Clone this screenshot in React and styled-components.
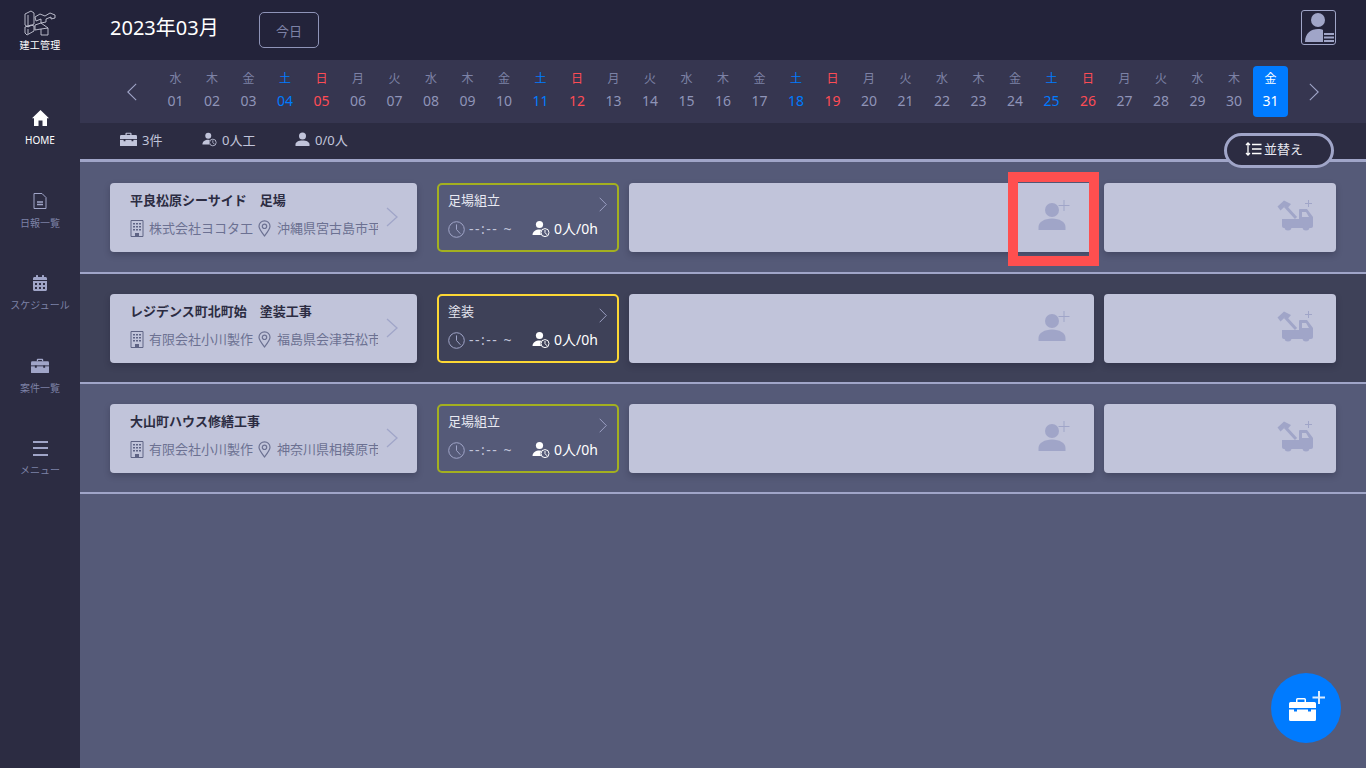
import React from 'react'
import styled, { createGlobalStyle } from 'styled-components'
import { FaCalendarAlt } from 'react-icons/fa'

const GlobalStyle = createGlobalStyle`
  html, body {
    margin: 0;
    padding: 0;
    height: 100%;
    overflow: hidden;
    background: #555a78;
    font-family: "Noto Sans", "Noto Sans CJK JP", sans-serif;
  }
  * { box-sizing: border-box; }
`

const WEEK = ['水', '木', '金', '土', '日', '月', '火']
const DAYS = Array.from({ length: 31 }, (_, i) => ({
  num: String(i + 1).padStart(2, '0'),
  week: WEEK[i % 7],
  tone: i % 7 === 3 ? 'sat' : i % 7 === 4 ? 'sun' : 'normal',
  active: i === 30,
}))

const JOBS = [
  { title: '平良松原シーサイド　足場', company: '株式会社ヨコタ工', place: '沖縄県宮古島市平', task: '足場組立', border: '#a3b020', dark: false },
  { title: 'レジデンス町北町始　塗装工事', company: '有限会社小川製作', place: '福島県会津若松市', task: '塗装', border: '#fdd835', dark: true },
  { title: '大山町ハウス修繕工事', company: '有限会社小川製作', place: '神奈川県相模原市', task: '足場組立', border: '#a3b020', dark: false },
]

const Briefcase = ({ size = 16, notch = '#2c2c42' }) => (
  <svg width={size} height={size * 0.86} viewBox="0 0 28 24" fill="currentColor">
    <path d="M9 5V2.500A1.500 1.500 0 0 1 10.500 1h7A1.500 1.500 0 0 1 19 2.500V5h-2V3h-6v2z" />
    <path d="M2 5h24a2 2 0 0 1 2 2v15a2 2 0 0 1-2 2H2a2 2 0 0 1-2-2V7a2 2 0 0 1 2-2z" />
    <path d="M0 11.500h28v1.400H0z" fill={notch} />
    <path d="M6 11.500h3V15H6zM19 11.500h3V15h-3z" fill={notch} />
  </svg>
)

const ClockFace = ({ x = 0, y = 0, r = 4, stroke = 'currentColor' }) => (
  <g fill="none" stroke={stroke} strokeWidth="1">
    <circle cx={x} cy={y} r={r} />
    <path d={`M${x} ${y - r * 0.65}V${y}L${x + r * 0.5} ${y + r * 0.55}`} />
  </g>
)

const PersonClock = ({ size = 18, bg = '#555a78' }) => (
  <svg width={size} height={size} viewBox="0 0 18 18" fill="currentColor">
    <circle cx="7.500" cy="4.500" r="3.600" />
    <path d="M0.500 15c0-3.600 3.200-5.600 7-5.600 1.400 0 2.700.3 3.800.8V15z" />
    <circle cx="13" cy="12.600" r="4.600" fill={bg} stroke="none" />
    <ClockFace x={13} y={12.600} r={4} />
  </svg>
)

const PersonPlus = () => (
  <svg width="32" height="30" viewBox="0 0 32 30" fill="#a0a5c8">
    <circle cx="14" cy="10" r="7" />
    <path d="M0.500 30v-3c0-5 6-8.500 13.500-8.500S27.500 22 27.500 27v3z" />
    <path d="M25.500 0h1v5h5v1h-5v5h-1V6h-5V5h5z" />
  </svg>
)

const TruckPlus = () => (
  <svg width="37" height="31" viewBox="0 0 37 31" fill="#a0a5c8">
    <path d="M0.500 6.500 7 0.500l7 3.500-3 3.500-3-1.200-4.500 4.200z" />
    <path d="M8 6l11 12" stroke="#a0a5c8" strokeWidth="3" fill="none" />
    <path d="M5 19H22V10a1 1 0 0 1 1-1h7l6 8v9a2 2 0 0 1-2 2H7a2 2 0 0 1-2-2z" />
    <circle cx="11" cy="27" r="3.500" />
    <circle cx="29" cy="27" r="3.500" />
    <path d="M25 12h4l3 5h-7z" fill="#c1c4da" />
    <path d="M31 0h1v3h3v1h-3v3h-1V4h-3V3h3z" />
  </svg>
)

const Chevron = ({ w = 12, h = 20, color = '#a0a5c8', sw = 1.3, left = false }) => (
  <svg width={w} height={h} viewBox="0 0 12 20" fill="none" stroke={color} strokeWidth={sw} preserveAspectRatio="none">
    <path d={left ? 'M11 1L1 10l10 9' : 'M1 1l10 9-10 9'} />
  </svg>
)

const Logo = () => (
  <svg width="34" height="26" viewBox="0 0 34 26" fill="none" stroke="#c8cad8" strokeWidth="0.9">
    <path d="M2 4L8 1l3 2v11l-6 3-3-2zM5 5v12" />
    <path d="M2 17l6-2 3 1v5l-7 4-2-2zM5 19v5" />
    <path d="M12 7l5-3 5 2 5-3 5 2v3l-4 1V7l-5 2v3l-5 1V9l-5 2z" />
    <path d="M12 15l6-2 7 5v7h-7v-6l-6 1zM18 19l7-1" />
  </svg>
)

const Shell = styled.div`
  display: grid;
  grid-template-columns: 80px 1fr;
  grid-template-rows: 60px 1fr;
  width: 1366px;
  height: 768px;
  position: relative;
  overflow: hidden;
`

const BrandCell = styled.div`
  background: #23233a;
  display: flex;
  flex-direction: column;
  align-items: center;
  padding-top: 10px;
  color: #fff;
  font-size: 10px;
  line-height: 14px;
  letter-spacing: 0.3px;
  svg { margin-bottom: 2px; }
`

const Header = styled.header`
  background: #23233a;
  display: flex;
  align-items: center;
  padding: 0 30px;
`

const MonthTitle = styled.h1`
  margin: 0 40px 0 0;
  font-size: 20px;
  font-weight: 400;
  color: #fff;
  line-height: 24px;
  padding-bottom: 4px;
  width: 109px;
  white-space: nowrap;
`

const TodayButton = styled.button`
  width: 60px;
  height: 36px;
  border: 1px solid #8f94b8;
  border-radius: 5px;
  background: transparent;
  color: #7d82a6;
  font: inherit;
  font-size: 13px;
  padding: 0;
`

const Avatar = styled.div`
  margin-left: auto;
  margin-bottom: 5px;
  width: 35px;
  height: 35px;
  border: 1px solid #a0a5c8;
  border-radius: 3px;
  overflow: hidden;
`

const Side = styled.nav`
  background: #2c2c42;
  display: flex;
  flex-direction: column;
  align-items: center;
  padding-top: 48px;
`

const SideItem = styled.a`
  display: flex;
  flex-direction: column;
  align-items: center;
  height: 82.500px;
  width: 100%;
  color: ${p => (p.$active ? '#fff' : '#a0a5c8')};
  font-size: 10px;
  line-height: 14px;
  white-space: nowrap;

  span { color: ${p => (p.$active ? '#fff' : '#7d82a6')}; margin-top: 5px; }
  .slot { height: 20px; display: flex; align-items: center; justify-content: center; }
`

const Main = styled.main`
  position: relative;
  display: flex;
  flex-direction: column;
  min-width: 0;
`

const DateStrip = styled.div`
  background: #363650;
  height: 63px;
  display: flex;
  align-items: center;
  padding-left: 47px;
`

const DateGrid = styled.div`
  display: grid;
  grid-template-columns: repeat(31, 36.500px);
  margin-left: 20.250px;
  margin-right: 20.500px;
`

const DateCell = styled.div`
  height: 51px;
  margin: 0 0.750px;
  padding-top: 4px;
  border-radius: 4px;
  display: flex;
  flex-direction: column;
  align-items: center;
  background: ${p => (p.$active ? '#007bff' : 'transparent')};
  color: ${p => (p.$active ? '#fff' : p.$tone === 'sat' ? '#007bff' : p.$tone === 'sun' ? '#ff4c55' : '#8f94b8')};
  .w { font-size: 12px; line-height: 18px; color: ${p => (p.$active ? '#fff' : p.$tone === 'normal' ? '#7d82a6' : 'inherit')}; }
  .d { font-size: 14px; line-height: 21px; margin-top: 2px; }
`

const InfoBar = styled.div`
  background: #2c2c42;
  height: 36px;
  display: flex;
  align-items: center;
  padding: 0 0 4px 40px;
  color: #b4b7d0;
  font-size: 13px;
`

const InfoItem = styled.div`
  display: flex;
  align-items: center;
  gap: ${p => p.$gap || 5}px;
  width: ${p => p.$w}px;
  color: #c1c4da;
`

const SortButton = styled.button`
  position: absolute;
  left: 1144px;
  top: 73px;
  width: 110px;
  height: 35px;
  border: 3px solid #a0a5c8;
  border-radius: 18px;
  background: #2c2c42;
  color: #e8e9f2;
  font: inherit;
  font-size: 13px;
  display: flex;
  align-items: center;
  justify-content: center;
  gap: 2px;
  padding: 0 10px 4px 0;
  z-index: 2;
`

const Rows = styled.div`
  flex: 1;
  background: #555a78;
  border-top: 3px solid #a0a5c8;
`

const Row = styled.section`
  height: ${p => (p.$first ? 112 : 110)}px;
  padding: ${p => (p.$first ? 21 : 20)}px 30px 0;
  display: grid;
  grid-template-columns: 317px 182px 465px 232px;
  column-gap: 10px;
  align-items: start;
  background: ${p => (p.$dark ? '#3e4158' : '#555a78')};
  border-bottom: 2px solid #a0a5c8;
  position: relative;
`

const ClientCard = styled.div`
  height: 69px;
  width: 307px;
  background: #c1c4da;
  border-radius: 4px;
  box-shadow: 0 3px 6px rgba(20, 20, 40, 0.25);
  padding: 8px 0 0 20px;
  position: relative;
  color: #2c2c42;

  .title { font-size: 13px; font-weight: 700; line-height: 18px; white-space: pre; }
  .chev { position: absolute; right: 19px; top: 24px; }
`

const ClientMeta = styled.div`
  display: flex;
  align-items: center;
  margin-top: 9px;
  color: #6c7192;
  font-size: 13px;
  line-height: 20px;
`

const MetaClip = styled.span`
  width: ${p => p.$w}px;
  overflow: hidden;
  white-space: nowrap;
  margin-left: ${p => p.$ml}px;
  flex: none;
`

const PinSvg = styled.svg`
  margin-left: 5px;
  flex: none;
`

const TaskCard = styled.div`
  width: 182px;
  height: 69px;
  border: 2px solid ${p => p.$border};
  border-radius: 5px;
  padding: 6px 9px 0;
  position: relative;
  color: #e8e9f2;
  .name { font-size: 13px; line-height: 19px; }
  .chev { position: absolute; right: 10px; top: 10px; }
`

const TaskMeta = styled.div`
  display: flex;
  align-items: center;
  margin-top: 9px;
  font-size: 14px;
  line-height: 20px;
  .time { color: #c1c4da; margin-left: 4px; width: 63px; white-space: nowrap; letter-spacing: 1.500px; }
  .count { color: #fff; margin-left: 4px; white-space: nowrap; }
  svg.clock { color: #a0a5c8; }
`

const PersonSlot = styled.span`
  width: 18px;
  display: flex;
  color: #fff;
`

const AddCard = styled.div`
  height: 69px;
  background: #c1c4da;
  border-radius: 4px;
  box-shadow: 0 3px 6px rgba(20, 20, 40, 0.25);
  display: flex;
  justify-content: flex-end;
  align-items: flex-start;
  padding: 17px ${p => p.$pr}px 0 0;
`

const Highlight = styled.div`
  position: absolute;
  left: 928px;
  top: 10px;
  width: 91px;
  height: 94px;
  border: 10px solid #ff4f4f;
  pointer-events: none;
`

const Fab = styled.button`
  position: absolute;
  right: 25px;
  bottom: 25px;
  width: 70px;
  height: 70px;
  border: none;
  border-radius: 50%;
  background: #007bff;
  color: #fff;
  padding: 0 0 4px 2px;
  display: flex;
  align-items: center;
  justify-content: center;
`

const MenuBars = styled.div`
  width: 15px;
  height: 15px;
  border-top: 2px solid #a0a5c8;
  border-bottom: 2px solid #a0a5c8;
  position: relative;
  &::after {
    content: '';
    position: absolute;
    left: 0;
    right: 0;
    top: 4.500px;
    height: 2px;
    background: #a0a5c8;
  }
`

const SortIcon = () => (
  <svg width="17" height="14" viewBox="0 0 17 14" fill="none" stroke="#fff" strokeWidth="1.300">
    <path d="M3 1v12M1 3l2-2 2 2M1 11l2 2 2-2" />
    <path d="M7 2.500h9.500M7 7h9.500M7 11.500h9.500" />
  </svg>
)

const HomeIcon = () => (
  <svg width="17" height="16" viewBox="0 0 17 16" fill="#fff">
    <path d="M8.500 0 17 8.200H15V16H10.500V10.500H6.500V16H2V8.200H0z" />
  </svg>
)

const DocIcon = () => (
  <svg width="14" height="16" viewBox="0 0 14 16" fill="none" stroke="#a0a5c8" strokeWidth="1">
    <path d="M1 .5h8l4 4v11H1z" />
    <path d="M4 9h6M4 11.500h6" strokeWidth="1.500" />
  </svg>
)

const UserCard = () => (
  <svg width="33" height="33" viewBox="0 0 33 33" fill="#a0a5c8">
    <circle cx="16" cy="9" r="7" />
    <path d="M3 31c0-9 6-13 13-13 2.500 0 4 .4 5 1v12z" />
    <path d="M22 22h10v2H22zM22 25.500h10v2H22zM22 29h10v2H22z" />
  </svg>
)

const ClockIcon = () => (
  <svg className="clock" width="17" height="17" viewBox="0 0 17 17">
    <ClockFace x={8.500} y={8.500} r={7.800} />
  </svg>
)

const BuildingIcon = () => (
  <svg width="14" height="17" viewBox="0 0 14 17" fill="#5f6485">
    <path d="M1 .5h12v16H1z" fill="none" stroke="#5f6485" />
    <path d="M3 3h2v1.500H3zM6 3h2v1.500H6zM9 3h2v1.500H9zM3 6h2v1.500H3zM6 6h2v1.500H6zM9 6h2v1.500H9zM3 9h2v1.500H3zM6 9h2v1.500H6zM9 9h2v1.500H9zM5 13h4v3.500H5z" />
  </svg>
)

const PinIcon = () => (
  <PinSvg width="13" height="17" viewBox="0 0 13 17" fill="none" stroke="#6c7192" strokeWidth="1.200">
    <path d="M6.500 16C3 11.500 1 9 1 6.300a5.500 5.500 0 0 1 11 0C12 9 10 11.500 6.500 16z" />
    <circle cx="6.500" cy="6.300" r="2.200" />
  </PinSvg>
)

function JobRow({ job, first }) {
  return (
    <Row $dark={job.dark} $first={first}>
      <ClientCard>
        <div className="title">{job.title}</div>
        <ClientMeta>
          <BuildingIcon />
          <MetaClip $w={104} $ml={5}>{job.company}</MetaClip>
          <PinIcon />
          <MetaClip $w={101} $ml={6}>{job.place}</MetaClip>
        </ClientMeta>
        <span className="chev"><Chevron /></span>
      </ClientCard>
      <TaskCard $border={job.border}>
        <div className="name">{job.task}</div>
        <span className="chev"><Chevron w={8} h={15} /></span>
        <TaskMeta>
          <ClockIcon />
          <span className="time">--:-- ~</span>
          <PersonSlot><PersonClock bg={job.dark ? '#3e4158' : '#555a78'} /></PersonSlot>
          <span className="count">0人/0h</span>
        </TaskMeta>
      </TaskCard>
      <AddCard $pr={24}><PersonPlus /></AddCard>
      <AddCard $pr={22}><TruckPlus /></AddCard>
      {first && <Highlight />}
    </Row>
  )
}

export default function App() {
  return (
    <Shell>
      <GlobalStyle />
      <BrandCell>
        <Logo />
        建工管理
      </BrandCell>
      <Header>
        <MonthTitle>2023年03月</MonthTitle>
        <TodayButton>今日</TodayButton>
        <Avatar><UserCard /></Avatar>
      </Header>
      <Side>
        <SideItem $active><div className="slot"><HomeIcon /></div><span>HOME</span></SideItem>
        <SideItem><div className="slot"><DocIcon /></div><span>日報一覧</span></SideItem>
        <SideItem><div className="slot"><FaCalendarAlt size={16} /></div><span>スケジュール</span></SideItem>
        <SideItem><div className="slot"><Briefcase size={18} /></div><span>案件一覧</span></SideItem>
        <SideItem><div className="slot"><MenuBars /></div><span>メニュー</span></SideItem>
      </Side>
      <Main>
        <DateStrip>
          <Chevron w={10} h={18} left />
          <DateGrid>
            {DAYS.map(d => (
              <DateCell key={d.num} $tone={d.tone} $active={d.active}>
                <span className="w">{d.week}</span>
                <span className="d">{d.num}</span>
              </DateCell>
            ))}
          </DateGrid>
          <Chevron w={10} h={18} />
        </DateStrip>
        <InfoBar>
          <InfoItem $w={82}><Briefcase size={17} />3件</InfoItem>
          <InfoItem $w={93}><PersonClock size={15} bg="#2c2c42" />0人工</InfoItem>
          <InfoItem $w={90}>
            <svg width="15" height="15" viewBox="0 0 15 15" fill="currentColor">
              <circle cx="7.500" cy="4" r="3.500" />
              <path d="M0.500 14v-1.500c0-2.500 3-4 7-4s7 1.500 7 4V14z" />
            </svg>
            0/0人
          </InfoItem>
        </InfoBar>
        <SortButton><SortIcon />並替え</SortButton>
        <Rows>
          {JOBS.map((job, i) => <JobRow key={job.title} job={job} first={i === 0} />)}
        </Rows>
      </Main>
      <Fab>
        <svg width="36" height="30" viewBox="0 0 36 30" fill="#fff">
          <path d="M7 11V8.500A1.500 1.500 0 0 1 8.500 7h7A1.500 1.500 0 0 1 17 8.500V11h-1.500V8.500h-7V11z" />
          <path d="M1.500 11h24a1.500 1.500 0 0 1 1.500 1.500v16a1.500 1.500 0 0 1-1.500 1.500h-24A1.500 1.500 0 0 1 0 28.500v-16A1.500 1.500 0 0 1 1.500 11z" />
          <path d="M0 17h27v1.500H0zM5 17h3v3.500H5zM19 17h3v3.500h-3z" fill="#007bff" />
          <path d="M29 0h2v5.500h5.500v2H31V13h-2V7.500h-5.500v-2H29z" opacity="0.85" />
        </svg>
      </Fab>
    </Shell>
  )
}
